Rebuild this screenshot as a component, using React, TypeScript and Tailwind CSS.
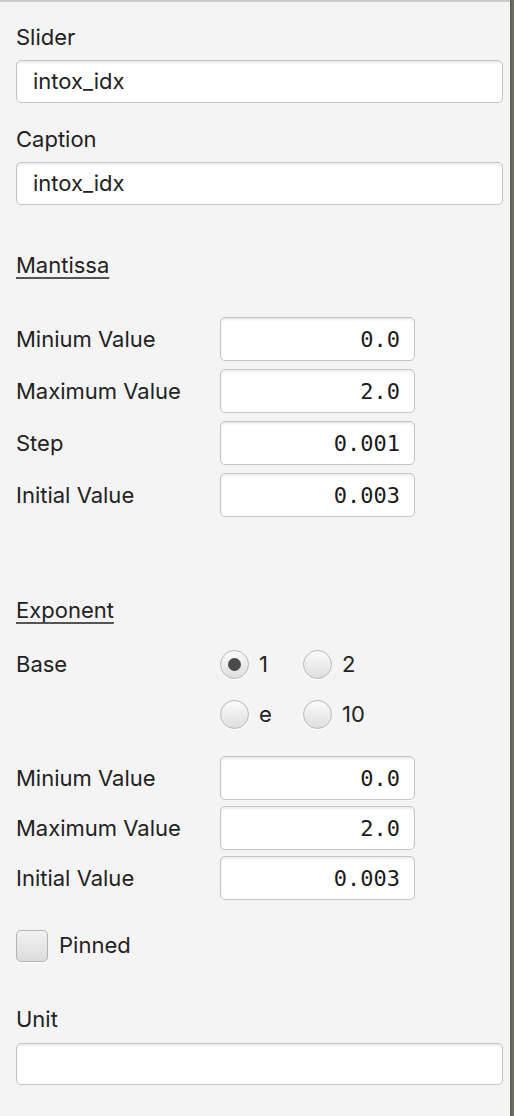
import React from 'react';

const font = { fontFamily: 'Inter, "Liberation Sans", sans-serif' };

const TextBox = ({ value, className = '' }: { value: string; className?: string }) => (
  <div
    className={`flex items-center rounded-[5px] border-[1.5px] border-[#c4c4c4] bg-white px-4 text-[22px] text-[#222] shadow-[inset_0_2px_2px_rgba(0,0,0,0.08)] ${className}`}
  >
    {value}
  </div>
);

const NumberRow = ({ label, value }: { label: string; value: string }) => (
  <div className="flex h-[44px] items-center">
    <div className="w-[204px] text-[22px] text-[#222]">{label}</div>
    <div
      className="flex h-full w-[195px] items-center justify-end rounded-[5px] border-[1.5px] border-[#c4c4c4] bg-white pr-[14px] text-[22px] text-[#1a1a1a] shadow-[inset_0_2px_2px_rgba(0,0,0,0.08)]"
      style={{ fontFamily: '"DejaVu Sans Mono", "Liberation Mono", monospace' }}
    >
      {value}
    </div>
  </div>
);

const Radio = ({ checked, label }: { checked?: boolean; label: string }) => (
  <div className="flex h-[29px] items-center gap-[10px]">
    <div className="flex h-[29px] w-[29px] items-center justify-center rounded-full border-[1.5px] border-[#b9b9b9] bg-gradient-to-b from-[#fbfbfb] to-[#dedede] shadow-[0_1px_1px_rgba(255,255,255,0.9)]">
      {checked && <div className="h-[13px] w-[13px] rounded-full bg-[#4b4b4b]" />}
    </div>
    <span className="text-[22px] leading-[29px] text-[#222]">{label}</span>
  </div>
);

const Heading = ({ children, className = '' }: { children: React.ReactNode; className?: string }) => (
  <div
    className={`h-6 text-[22px] leading-6 text-[#222] underline decoration-[#555] decoration-2 underline-offset-[4px] ${className}`}
  >
    {children}
  </div>
);

export default function App() {
  return (
    <div className="flex h-[1116px] w-[514px] overflow-hidden" style={font}>
      <div className="flex w-[510px] flex-col border-t-2 border-[#c9c9c9] bg-[#f4f4f4] px-4">
        <div className="mt-[23px] h-6 text-[22px] leading-6 text-[#222]">Slider</div>
        <TextBox value="intox_idx" className="mt-[11px] h-[43px] w-[487px]" />

        <div className="mt-[24px] h-6 text-[22px] leading-6 text-[#222]">Caption</div>
        <TextBox value="intox_idx" className="mt-[11px] h-[43px] w-[487px]" />

        <Heading className="mt-[48px]">Mantissa</Heading>
        <div className="mt-[40px] flex flex-col gap-[8px]">
          <NumberRow label="Minium Value" value="0.0" />
          <NumberRow label="Maximum Value" value="2.0" />
          <NumberRow label="Step" value="0.001" />
          <NumberRow label="Initial Value" value="0.003" />
        </div>

        <Heading className="mt-[81px]">Exponent</Heading>
        <div className="mt-[28px] flex">
          <div className="w-[204px] text-[22px] leading-[29px] text-[#222]">Base</div>
          <div className="grid grid-cols-[83px_auto] gap-y-[21px]">
            <Radio checked label="1" />
            <Radio label="2" />
            <Radio label="e" />
            <Radio label="10" />
          </div>
        </div>

        <div className="mt-[27px] flex flex-col gap-[6px]">
          <NumberRow label="Minium Value" value="0.0" />
          <NumberRow label="Maximum Value" value="2.0" />
          <NumberRow label="Initial Value" value="0.003" />
        </div>

        <div className="mt-[29px] flex items-center gap-[11px]">
          <div className="h-[32px] w-[32px] rounded-[5px] border-[1.5px] border-[#b3b3b3] bg-gradient-to-b from-[#f2f2f2] to-[#dcdcdc] shadow-[0_1px_1px_rgba(255,255,255,0.9)]" />
          <span className="text-[22px] text-[#222]">Pinned</span>
        </div>

        <div className="mt-[45px] h-6 text-[22px] leading-6 text-[#222]">Unit</div>
        <TextBox value="" className="mt-[12px] h-[42px] w-[487px]" />
      </div>
      <div className="w-[4px] bg-gradient-to-r from-[#5e5a4e] to-[#7a7666]" />
    </div>
  );
}
